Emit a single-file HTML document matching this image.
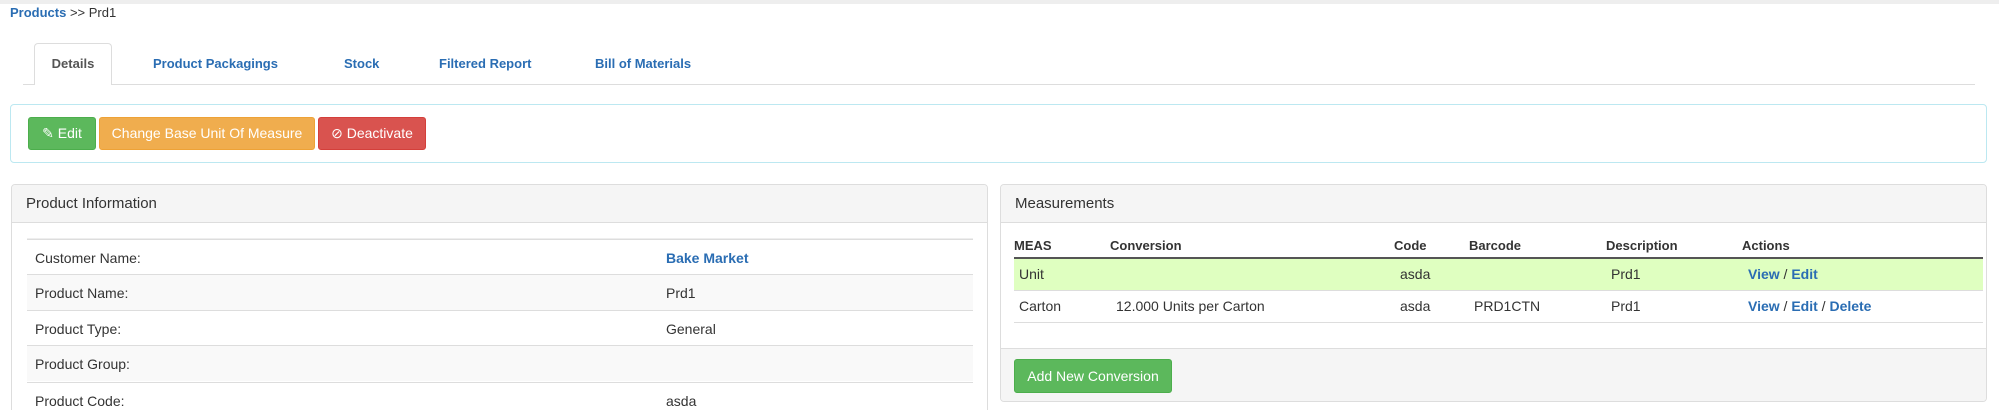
<!DOCTYPE html>
<html><head><meta charset="utf-8"><style>
*{box-sizing:border-box;margin:0;padding:0}
html{height:410px;overflow:hidden}
body{width:1999px;height:410px;overflow:hidden;background:#fff;font-family:"Liberation Sans",Arial,sans-serif;font-size:14px;color:#333;position:relative}
.a{position:absolute}
.blue{color:#2a6db3;font-weight:bold}
.btn{position:absolute;top:117px;height:33px;border-radius:3px;color:#fff;font-size:14px;line-height:31px;text-align:center;border:1px solid}
.panel{position:absolute;top:184px;border:1px solid #ddd;border-radius:4px;background:#fff;overflow:hidden}
.ph{background:#f5f5f5;border-bottom:1px solid #ddd;height:38px;line-height:37px;padding-left:14px;font-size:15px;color:#333}
.row{position:absolute;left:15px;right:14px;height:36px;border-top:1px solid #ddd;line-height:36px}
.row span{position:absolute}
.mt{position:absolute;left:13px;right:3px}
</style></head><body>
<div class="a" style="left:0;top:0;width:1999px;height:4px;background:#eee"></div>
<div class="a" style="left:10px;top:5px;font-size:13px"><span class="blue">Products</span> &gt;&gt; Prd1</div>

<div class="a" style="left:23px;top:84px;width:1952px;height:1px;background:#ddd"></div>
<div class="a" style="left:34px;top:43px;width:78px;height:42px;border:1px solid #ddd;border-bottom:none;border-radius:4px 4px 0 0;background:#fff;text-align:center;line-height:40px;font-weight:bold;font-size:13px;color:#555">Details</div>
<div class="a blue" style="left:153px;top:56px;font-size:13px">Product Packagings</div>
<div class="a blue" style="left:344px;top:56px;font-size:13px">Stock</div>
<div class="a blue" style="left:439px;top:56px;font-size:13px">Filtered Report</div>
<div class="a blue" style="left:595px;top:56px;font-size:13px">Bill of Materials</div>

<div class="a" style="left:10px;top:104px;width:1977px;height:59px;border:1px solid #bce8f1;border-radius:4px"></div>
<div class="btn" style="left:28px;width:68px;background:#5cb85c;border-color:#4cae4c">&#9998; Edit</div>
<div class="btn" style="left:99px;width:216px;background:#f0ad4e;border-color:#eea236">Change Base Unit Of Measure</div>
<div class="btn" style="left:318px;width:108px;background:#d9534f;border-color:#d43f3a">&#8856; Deactivate</div>

<div class="panel" style="left:11px;width:977px;height:240px">
<div class="ph">Product Information</div>
<div class="row" style="top:53px;height:1px;border-top:2px solid #eee"></div>
<div class="row" style="top:54px;background:#fff"><span style="left:8px">Customer Name:</span><span class="blue" style="left:639px">Bake Market</span></div>
<div class="row" style="top:89px;background:#f9f9f9"><span style="left:8px">Product Name:</span><span style="left:639px">Prd1</span></div>
<div class="row" style="top:125px;background:#fff"><span style="left:8px">Product Type:</span><span style="left:639px">General</span></div>
<div class="row" style="top:160px;background:#f9f9f9"><span style="left:8px">Product Group:</span><span style="left:639px"></span></div>
<div class="row" style="top:197px;background:#fff"><span style="left:8px">Product Code:</span><span style="left:639px">asda</span></div>
</div>

<div class="panel" style="left:1000px;width:987px;height:218px">
<div class="ph">Measurements</div>
<div class="mt" style="top:53px;height:20px;font-weight:bold;font-size:13px">
<span class="a" style="left:0">MEAS</span><span class="a" style="left:96px">Conversion</span><span class="a" style="left:380px">Code</span><span class="a" style="left:455px">Barcode</span><span class="a" style="left:592px">Description</span><span class="a" style="left:728px">Actions</span></div>
<div class="mt" style="top:72px;height:2px;background:#555"></div>
<div class="mt" style="top:74px;height:32px;background:#dfffc0;line-height:31px;border-bottom:1px solid #ddd">
<span class="a" style="left:5px">Unit</span><span class="a" style="left:386px">asda</span><span class="a" style="left:597px">Prd1</span><span class="a blue" style="left:734px">View <span style="color:#333;font-weight:normal">/</span> Edit</span></div>
<div class="mt" style="top:106px;height:32px;line-height:31px;border-bottom:1px solid #ddd">
<span class="a" style="left:5px">Carton</span><span class="a" style="left:102px">12.000 Units per Carton</span><span class="a" style="left:386px">asda</span><span class="a" style="left:460px">PRD1CTN</span><span class="a" style="left:597px">Prd1</span><span class="a blue" style="left:734px">View <span style="color:#333;font-weight:normal">/</span> Edit <span style="color:#333;font-weight:normal">/</span> Delete</span></div>
<div class="a" style="left:0;right:0;top:163px;bottom:0;background:#f5f5f5;border-top:1px solid #ddd"></div>
<div class="a" style="left:13px;top:174px;width:158px;height:34px;background:#5cb85c;border:1px solid #4cae4c;border-radius:3px;color:#fff;text-align:center;line-height:32px">Add New Conversion</div>
</div>
</body></html>
